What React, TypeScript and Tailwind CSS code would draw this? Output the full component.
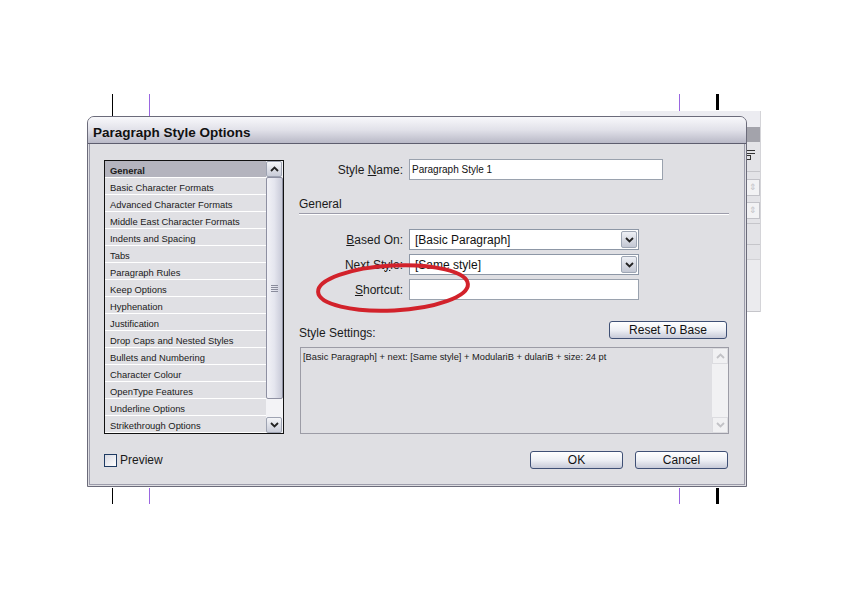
import React from 'react';

const sections = [
  'General',
  'Basic Character Formats',
  'Advanced Character Formats',
  'Middle East Character Formats',
  'Indents and Spacing',
  'Tabs',
  'Paragraph Rules',
  'Keep Options',
  'Hyphenation',
  'Justification',
  'Drop Caps and Nested Styles',
  'Bullets and Numbering',
  'Character Colour',
  'OpenType Features',
  'Underline Options',
  'Strikethrough Options',
];

const Chevron = ({ up = false, className = '' }: { up?: boolean; className?: string }) => (
  <svg width="9" height="6" viewBox="0 0 9 6" className={className}>
    <path
      d={up ? 'M1 5 L4.5 1.5 L8 5' : 'M1 1 L4.5 4.5 L8 1'}
      fill="none"
      stroke="currentColor"
      strokeWidth="1.8"
    />
  </svg>
);

const ArrowButton = ({ up = false }: { up?: boolean }) => (
  <div className="flex h-[16px] w-[16px] items-center justify-center rounded-[2px] border border-[#9ea3b2] bg-gradient-to-b from-[#f4f5f8] to-[#c9ccd8] text-[#222]">
    <Chevron up={up} />
  </div>
);

const Select = ({ value }: { value: string }) => (
  <div className="flex h-[21px] w-[230px] items-center border border-[#8d97a6] bg-white pl-[5px]">
    <span className="flex-1 text-[12px] leading-none text-[#111]">{value}</span>
    <div className="mr-[1px] flex h-[17px] w-[16px] items-center justify-center rounded-[2px] border border-[#9ea6b4] bg-gradient-to-b from-[#eef0f5] to-[#c3c7d3] text-[#222]">
      <Chevron />
    </div>
  </div>
);

const Row = ({ label, children, className = '' }: { label: React.ReactNode; children: React.ReactNode; className?: string }) => (
  <div className={`flex h-[21px] items-center gap-[6px] ${className}`}>
    <div className="w-[104px] text-right text-[12px] leading-none text-[#1a1a1a]">{label}</div>
    {children}
  </div>
);

const Button = ({ children, className = '' }: { children: React.ReactNode; className?: string }) => (
  <div
    className={`flex h-[18px] items-center justify-center rounded-[3px] border border-[#3f5075] bg-gradient-to-b from-white via-[#eef0f5] to-[#c7cad8] text-[12px] leading-none text-[#111] ${className}`}
  >
    {children}
  </div>
);

export default function App() {
  return (
    <div className="relative h-[595px] w-[841px] overflow-hidden bg-white pt-[116px] font-['Liberation_Sans',Arial,sans-serif]">
      {/* crop marks */}
      <div className="absolute left-[112px] top-[94px] h-[22px] w-[1px] bg-black" />
      <div className="absolute left-[149px] top-[94px] h-[22px] w-[1px] bg-[#9a66e0]" />
      <div className="absolute left-[679px] top-[94px] h-[17px] w-[1px] bg-[#9a66e0]" />
      <div className="absolute left-[716px] top-[94px] h-[16px] w-[3px] bg-black" />
      <div className="absolute left-[112px] top-[488px] h-[16px] w-[1px] bg-black" />
      <div className="absolute left-[149px] top-[488px] h-[16px] w-[1px] bg-[#9a66e0]" />
      <div className="absolute left-[679px] top-[488px] h-[16px] w-[1px] bg-[#9a66e0]" />
      <div className="absolute left-[716px] top-[488px] h-[16px] w-[3px] bg-black" />

      {/* panel behind the dialog */}
      <div className="absolute left-[620px] top-[111px] flex h-[201px] w-[141px] flex-col border-r border-[#d4d4d8] bg-[#e3e3e7]">
        <div className="h-[16px] bg-[#ececf1]" />
        <div className="h-[15px] bg-[#a3a3ab]" />
        <div className="flex h-[30px] items-start justify-end border-b border-[#c5c5ca] pr-[5px] pt-[8px]">
          <div className="relative h-[10px] w-[10px]">
            <div className="absolute left-0 top-0 h-[1px] w-[10px] bg-[#333]" />
            <div className="absolute left-0 top-[3px] h-[1px] w-[10px] bg-[#333]" />
            <div className="absolute left-0 top-[5px] h-[5px] w-[6px] border border-[#333]" />
          </div>
        </div>
        <div className="flex flex-col items-end gap-[6px] pt-[7px]">
          <div className="flex h-[17px] w-[14px] items-center justify-center border border-[#c2c2c8] bg-[#f2f2f4] text-[9px] leading-none text-[#c4c4c8]">⇕</div>
          <div className="flex h-[17px] w-[14px] items-center justify-center border border-[#c2c2c8] bg-[#f2f2f4] text-[9px] leading-none text-[#c4c4c8]">⇕</div>
        </div>
        <div className="mt-[4px] h-[21px] border-t border-[#c5c5ca]" />
        <div className="h-[15px] border-t border-[#c5c5ca]" />
        <div className="flex-1 border-t border-[#d2d2d6] bg-[#ebebee]" />
        <div className="h-[1px] bg-[#c5c5ca]" />
      </div>

      {/* dialog */}
      <div className="relative ml-[87px] flex h-[371px] w-[660px] flex-col rounded-t-[7px] border border-[#6b6b7a] bg-[#dfdfe3]">
        <div className="flex h-[27px] items-center rounded-t-[6px] border-b border-[#5d5d6e] bg-gradient-to-b from-[#f8f8fb] via-[#e1e1e9] to-[#b9b9c7] pl-[5px] pt-[5px]">
          <span className="text-[13.5px] font-bold leading-none text-[#111]">Paragraph Style Options</span>
        </div>

        <div className="mx-[1px] mb-[1px] flex flex-1 flex-col border border-t-0 border-[#9c9cab] pl-[14px] pt-[15px]">
          <div className="flex items-start">
            {/* section list */}
            <div className="mt-[1px] flex h-[274px] w-[180px] border border-[#111]">
              <div className="flex w-[161px] flex-col bg-[#e0e0e4]">
                {sections.map((s, i) => (
                  <div
                    key={s}
                    className={`flex h-[17px] shrink-0 items-center border-b border-white pl-[5px] pt-[3px] text-[9.4px] leading-none text-[#1a1a1a] ${
                      i === 0 ? 'bg-[#b4b4be] font-bold' : ''
                    }`}
                  >
                    {s}
                  </div>
                ))}
              </div>
              <div className="flex w-[17px] flex-col bg-[#f3f3f6]">
                <ArrowButton up />
                <div className="flex h-[222px] items-center justify-center rounded-[2px] border border-[#8e90a2] bg-gradient-to-r from-[#f2f2f7] via-[#e4e5ee] to-[#c8cad8]">
                  <div className="flex flex-col gap-[1px]">
                    <div className="h-[1px] w-[7px] bg-[#8a8c9c]" />
                    <div className="h-[1px] w-[7px] bg-[#8a8c9c]" />
                    <div className="h-[1px] w-[7px] bg-[#8a8c9c]" />
                    <div className="h-[1px] w-[7px] bg-[#8a8c9c]" />
                  </div>
                </div>
                <div className="flex-1" />
                <ArrowButton />
              </div>
            </div>

            {/* settings */}
            <div className="ml-[15px] flex w-[430px] flex-col">
              <Row label={<>Style <span className="underline">N</span>ame:</>}>
                <div className="flex h-[21px] w-[254px] items-center border border-[#9aa2ae] bg-white pl-[2px] text-[10px] leading-none text-[#111]">
                  Paragraph Style 1
                </div>
              </Row>

              <div className="mt-[17px] h-[17px] border-b border-[#9c9caa] text-[12px] leading-[14px] text-[#1a1a1a] shadow-[0_1px_0_#ffffff]">
                General
              </div>

              <Row className="mt-[15px]" label={<><span className="underline">B</span>ased On:</>}>
                <Select value="[Basic Paragraph]" />
              </Row>
              <Row className="mt-[4px]" label={<>Next St<span className="underline">y</span>le:</>}>
                <Select value="[Same style]" />
              </Row>
              <Row className="mt-[4px]" label={<><span className="underline">S</span>hortcut:</>}>
                <div className="h-[21px] w-[230px] border border-[#9aa2ae] bg-white" />
              </Row>

              <div className="mt-[21px] flex h-[18px] items-end justify-between">
                <span className="text-[12px] leading-none text-[#1a1a1a]">Style Settings:</span>
                <Button className="mr-[2px] w-[118px]">Reset To Base</Button>
              </div>

              <div className="ml-[1px] mt-[8px] flex h-[87px] w-[429px] border border-[#9c9ca6] bg-[#dfdfe3]">
                <div className="flex-1 pl-[2px] pt-[5px] text-[9.3px] leading-none text-[#1a1a1a]">
                  [Basic Paragraph] + next: [Same style] + ModulariB + dulariB + size: 24 pt
                </div>
                <div className="flex w-[16px] flex-col justify-between bg-[#f1f1f3] text-[#c2c2c6]">
                  <div className="flex h-[16px] items-center justify-center border border-[#dcdce0]">
                    <Chevron up />
                  </div>
                  <div className="flex h-[16px] items-center justify-center border border-[#dcdce0]">
                    <Chevron />
                  </div>
                </div>
              </div>
            </div>
          </div>

          {/* footer */}
          <div className="mt-[17px] flex h-[18px] items-center">
            <div className="h-[13px] w-[13px] border border-[#1e3a62] bg-gradient-to-br from-[#d8d9e2] to-white" />
            <span className="ml-[3px] text-[12px] leading-none text-[#1a1a1a]">Preview</span>
            <div className="ml-auto mr-[16px] flex gap-[12px]">
              <Button className="w-[93px]">OK</Button>
              <Button className="w-[93px]">Cancel</Button>
            </div>
          </div>
        </div>
      </div>

      {/* hand-drawn red ellipse */}
      <svg className="pointer-events-none absolute left-0 top-0" width="841" height="595">
        <ellipse
          cx="393"
          cy="288"
          rx="75"
          ry="22.5"
          transform="rotate(-3 393 288)"
          fill="none"
          stroke="#d2222b"
          strokeWidth="4"
        />
      </svg>
    </div>
  );
}
